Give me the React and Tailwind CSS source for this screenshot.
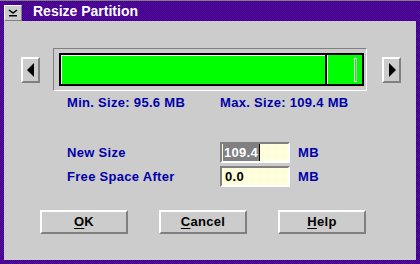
import React from 'react';

const purpleDither = 'bg-[image:repeating-conic-gradient(#6a00b8_0_25%,#2a0070_0_50%)] bg-[length:2px_2px]';
const yellowDither = 'bg-[image:repeating-conic-gradient(#ffffb8_0_25%,#ffffff_0_50%)] bg-[length:2px_2px]';

function ArrowButton({ dir }) {
    return (
        <div className="w-[19px] h-[26px] shrink-0 bg-[#cccccc] border-[2px] border-t-white border-l-white border-b-[#808080] border-r-[#808080] flex items-center justify-center">
            <svg width="8" height="14" viewBox="0 0 8 14">
                {dir === 'left'
                    ? <polygon points="7,0 7,14 0,7" fill="#000" />
                    : <polygon points="1,0 1,14 8,7" fill="#000" />}
            </svg>
        </div>
    );
}

function Field({ label, value, selected }) {
    return (
        <div className="flex items-center h-[21px]">
            <div className="w-[153px] text-[#0000aa]">{label}</div>
            <div className={`w-[70px] h-[21px] border-[2px] border-t-[#808080] border-l-[#808080] border-b-white border-r-white ${yellowDither} flex items-center pl-[1px]`}>
                {selected ? (
                    <>
                        <span className="bg-[#808080] text-white px-[1px] leading-[17px]">{value}</span>
                        <span className="w-[1px] h-[17px] bg-black" />
                    </>
                ) : (
                    <span className="text-black px-[2px] leading-[17px]">{value}</span>
                )}
            </div>
            <div className="ml-[8px] text-[#0000aa]">MB</div>
        </div>
    );
}

function DlgButton({ first, rest }) {
    return (
        <div className="w-[88px] h-[24px] bg-[#cccccc] border-[2px] border-t-white border-l-white border-b-[#808080] border-r-[#808080] flex items-center justify-center text-black">
            <span><span className="underline underline-offset-2">{first}</span>{rest}</span>
        </div>
    );
}

export default function App() {
    return (
        <div className={`w-[420px] h-[264px] ${purpleDither} flex flex-col px-[4px] pb-[4px] border-t border-[#808080] font-['Liberation_Sans',Arial,sans-serif] font-bold text-[13px] tracking-[0.3px]`}>
            {/* Title bar */}
            <div className="h-[20px] flex items-center">
                <div className="w-[18px] h-[16px] mt-[3px] bg-[#cccccc] border border-t-white border-l-white border-b-[#808080] border-r-[#808080] flex items-center justify-center">
                    <svg width="10" height="8" viewBox="0 0 10 8">
                        <polyline points="1,1 5,4 9,1" fill="none" stroke="#000" strokeWidth="1.5" />
                        <rect x="1" y="6" width="8" height="1.5" fill="#000" />
                    </svg>
                </div>
                <div className="ml-[11px] text-white text-[14px] tracking-normal">Resize Partition</div>
            </div>

            {/* Body */}
            <div className="flex-1 bg-[#cccccc] flex flex-col">
                <div className="flex items-center pl-[17px] mt-[27px]">
                    <ArrowButton dir="left" />
                    <div className="ml-[13px] w-[314px] h-[43px] border border-t-[#808080] border-l-[#808080] border-b-white border-r-white pl-[5px] pr-[2px] py-[4px]">
                        <div className="w-full h-full border-[2px] border-black flex">
                            <div className="w-[264px] h-full bg-[#00ff00] border-t border-l border-white" />
                            <div className="w-[2px] h-full bg-black" />
                            <div className="flex-1 h-full bg-[#00ff00] border-l border-white flex items-center justify-end pr-[5px]">
                                <div className="w-[3px] h-[24px] border border-white border-r-[#bbbbbb]" />
                            </div>
                        </div>
                    </div>
                    <div className="ml-[15px]">
                        <ArrowButton dir="right" />
                    </div>
                </div>

                <div className="flex mt-[4px] pl-[63px] text-[#0000aa] leading-[15px]">
                    <div className="w-[153px]">Min. Size: 95.6 MB</div>
                    <div>Max. Size: 109.4 MB</div>
                </div>

                <div className="flex flex-col gap-[3px] mt-[32px] pl-[63px]">
                    <Field label="New Size" value="109.4" selected />
                    <Field label="Free Space After" value="0.0" />
                </div>

                <div className="flex gap-[31px] mt-[23px] pl-[36px]">
                    <DlgButton first="O" rest="K" />
                    <DlgButton first="C" rest="ancel" />
                    <DlgButton first="H" rest="elp" />
                </div>
            </div>
        </div>
    );
}
